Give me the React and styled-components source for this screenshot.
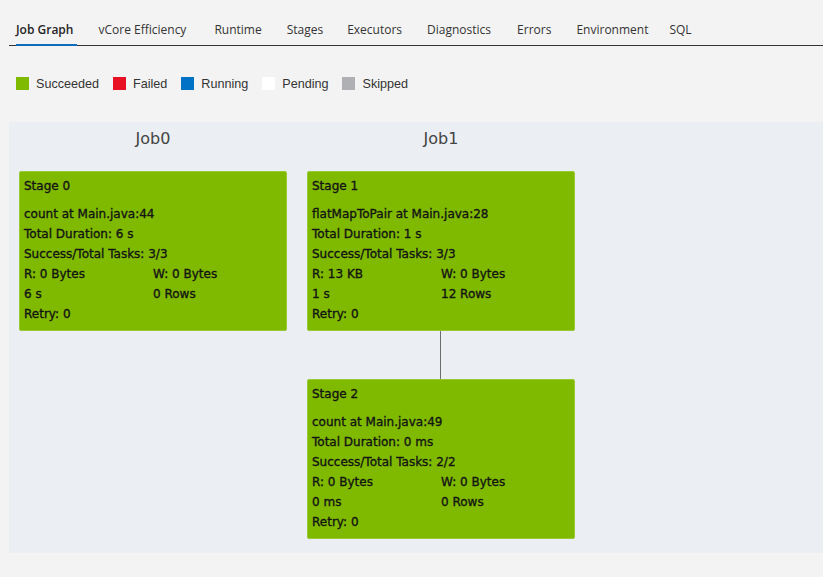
import styled, { createGlobalStyle } from 'styled-components';

const GlobalStyle = createGlobalStyle`
  html, body {
    margin: 0;
    padding: 0;
    background: #f3f3f3;
  }
  body {
    font-family: "Open Sans", "Noto Sans", sans-serif;
  }
`;

const Page = styled.div`
  width: 823px;
  height: 577px;
  overflow: hidden;
  background: #f3f3f3;
  padding-left: 9px;
  box-sizing: border-box;
`;

const TabBar = styled.div`
  display: flex;
  align-items: flex-end;
  height: 46px;
  border-bottom: 1px solid #333;
  box-sizing: border-box;
  padding-left: 7px;
`;

const Tab = styled.div`
  position: relative;
  margin-right: ${(p) => p.$gap}px;
  height: 45px;
  line-height: 60px;
  font-size: 12px;
  font-weight: ${(p) => (p.$active ? 600 : 400)};
  color: ${(p) => (p.$active ? '#252525' : '#333')};
  white-space: nowrap;

  &::after {
    content: '';
    display: ${(p) => (p.$active ? 'block' : 'none')};
    position: absolute;
    left: 0;
    right: -4px;
    bottom: -1px;
    height: 2px;
    background: #0f6cbd;
  }
`;

const Legend = styled.div`
  display: flex;
  align-items: center;
  height: 76px;
  padding: 0 0 1px 7px;
  box-sizing: border-box;
`;

const LegendItem = styled.div`
  display: flex;
  align-items: center;
  margin-right: 14px;
  font-size: 12.6px;
  color: #333;
  font-family: "Liberation Sans", "Open Sans", sans-serif;
`;

const Swatch = styled.span`
  width: 13px;
  height: 13px;
  background: ${(p) => p.$color};
  margin-right: 7px;
`;

const Graph = styled.div`
  display: flex;
  align-items: flex-start;
  gap: 20px;
  background: #ebeef2;
  padding: 7px 10px 14px;
  height: 431px;
  box-sizing: border-box;
`;

const JobColumn = styled.div`
  display: flex;
  flex-direction: column;
  align-items: center;
  width: 268px;
`;

const JobTitle = styled.div`
  font-family: "DejaVu Sans", sans-serif;
  font-size: 16px;
  line-height: 20px;
  color: #444;
  margin-bottom: 22px;
`;

const StageBox = styled.div`
  width: 268px;
  height: 160px;
  box-sizing: border-box;
  background: #7fba00;
  border: 1px solid #98c832;
  border-radius: 2px;
  padding: 4px 4px 7px;
  font-family: "DejaVu Sans", sans-serif;
  font-size: 12px;
  color: #141414;
  -webkit-text-stroke: 0.35px #141414;
`;

const StageName = styled.div`
  line-height: 20px;
  margin-bottom: 8px;
`;

const Line = styled.div`
  line-height: 20px;
  white-space: nowrap;
`;

const Pair = styled.div`
  display: grid;
  grid-template-columns: 129px 1fr;
  line-height: 20px;
`;

const Connector = styled.div`
  width: 1px;
  height: 48px;
  margin-right: 1px;
  background: #6e6e6e;
`;

const tabs = [
  ['Job Graph', 25],
  ['vCore Efficiency', 28],
  ['Runtime', 25],
  ['Stages', 24],
  ['Executors', 25],
  ['Diagnostics', 26],
  ['Errors', 25],
  ['Environment', 21],
  ['SQL', 0],
];

const legend = [
  ['Succeeded', '#7fba00'],
  ['Failed', '#e81123'],
  ['Running', '#0072c6'],
  ['Pending', '#ffffff'],
  ['Skipped', '#aeb0b3'],
];

const jobs = [
  {
    name: 'Job0',
    stages: [
      { name: 'Stage 0', op: 'count at Main.java:44', dur: '6 s', tasks: '3/3', r: '0 Bytes', w: '0 Bytes', time: '6 s', rows: '0 Rows', retry: 0 },
    ],
  },
  {
    name: 'Job1',
    stages: [
      { name: 'Stage 1', op: 'flatMapToPair at Main.java:28', dur: '1 s', tasks: '3/3', r: '13 KB', w: '0 Bytes', time: '1 s', rows: '12 Rows', retry: 0 },
      { name: 'Stage 2', op: 'count at Main.java:49', dur: '0 ms', tasks: '2/2', r: '0 Bytes', w: '0 Bytes', time: '0 ms', rows: '0 Rows', retry: 0 },
    ],
  },
];

const Stage = ({ s }) => (
  <StageBox>
    <StageName>{s.name}</StageName>
    <Line>{s.op}</Line>
    <Line>Total Duration: {s.dur}</Line>
    <Line>Success/Total Tasks: {s.tasks}</Line>
    <Pair>
      <span>R: {s.r}</span>
      <span>W: {s.w}</span>
    </Pair>
    <Pair>
      <span>{s.time}</span>
      <span>{s.rows}</span>
    </Pair>
    <Line>Retry: {s.retry}</Line>
  </StageBox>
);

export default function App() {
  return (
    <Page>
      <GlobalStyle />
      <TabBar>
        {tabs.map(([t, gap], i) => (
          <Tab key={t} $active={i === 0} $gap={gap}>
            {t}
          </Tab>
        ))}
      </TabBar>
      <Legend>
        {legend.map(([label, color]) => (
          <LegendItem key={label}>
            <Swatch $color={color} />
            {label}
          </LegendItem>
        ))}
      </Legend>
      <Graph>
        {jobs.map((job) => (
          <JobColumn key={job.name}>
            <JobTitle>{job.name}</JobTitle>
            {job.stages.map((s, i) => (
              <div key={s.name} style={{ display: 'contents' }}>
                {i > 0 && <Connector />}
                <Stage s={s} />
              </div>
            ))}
          </JobColumn>
        ))}
      </Graph>
    </Page>
  );
}
